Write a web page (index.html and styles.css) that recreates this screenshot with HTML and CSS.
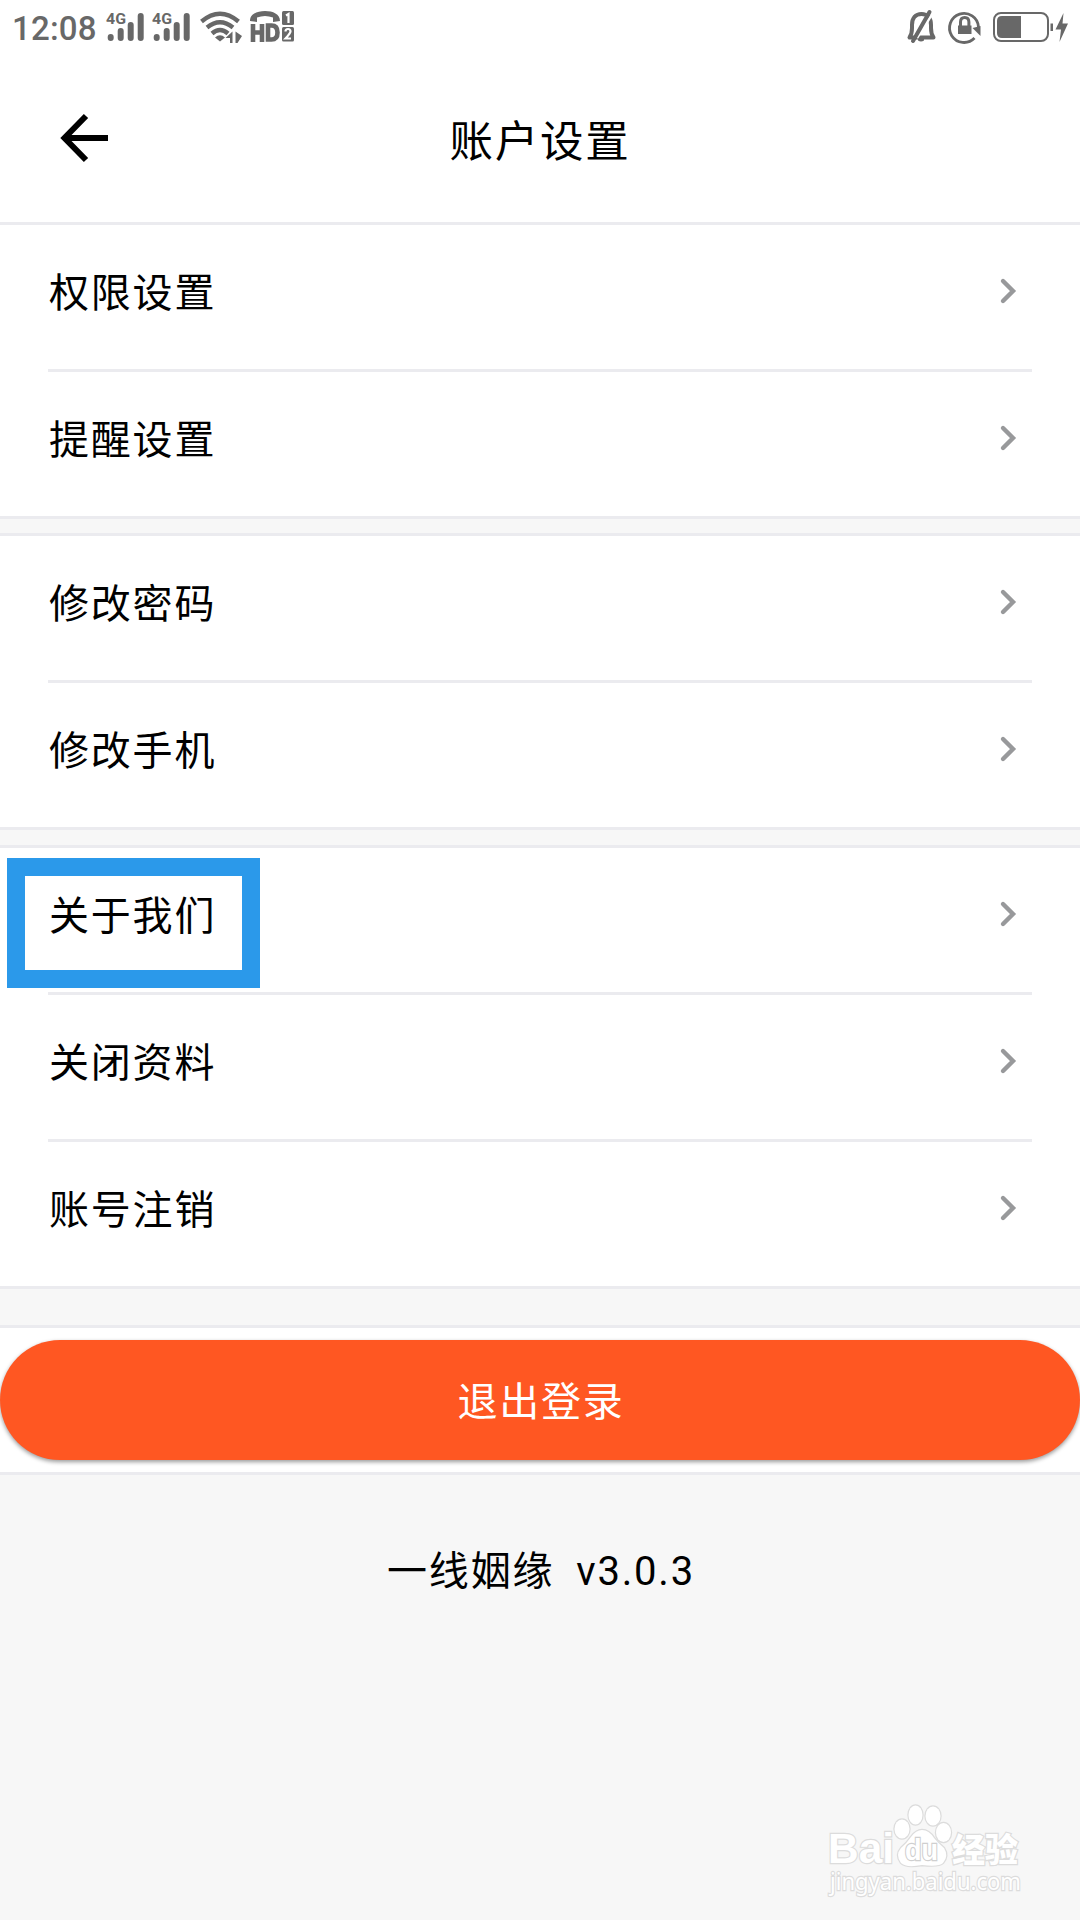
FILE: index.html
```html
<!DOCTYPE html>
<html lang="zh-CN">
<head>
<meta charset="utf-8">
<title>账户设置</title>
<link rel="stylesheet" href="styles.css">
</head>
<body>
<div class="screen">
  <div class="statusbar">
    <span class="clock">12:08</span>
    <svg class="signal" width="39" height="30" viewBox="0 0 39 30"><text class="net" x="0" y="12" textLength="20" lengthAdjust="spacingAndGlyphs">4G</text><path d="M4.700 25v1M14.700 19v7M24.700 13v13M34.700 4v22"/></svg>
    <svg class="signal second" width="39" height="30" viewBox="0 0 39 30"><text class="net" x="0" y="12" textLength="20" lengthAdjust="spacingAndGlyphs">4G</text><path d="M4.700 25v1M14.700 19v7M24.700 13v13M34.700 4v22"/></svg>
    <svg class="wifi" width="43" height="34" viewBox="0 0 43 34"><path class="arc" d="M1.500 9.500Q20 -6 38.500 9.500M7 15.500Q20 5 33 15.500M12 21.500Q20 14.500 28 21.500"/><path class="solid" d="M15 25.500Q20 21 25 25.500L20 29.500ZM32.500 19.500V31h-2.500v-5h-4.500ZM35.500 31V19.500l6.500 4.500L37.500 31Z"/></svg>
    <svg class="hd" width="45" height="34" viewBox="0 0 45 34"><path class="solid" d="M0 11C0 4 7 1 15 1s15 3 15 10l-7 1V7.500Q15 4.500 7 7.500V12Z"/><path class="letters" d="M3 14v18M12 14v18M3 22.500h9M18 15.500v14h3.500q6 0 6-7t-6-7Z"/><rect class="solid" x="32" y="1" width="12" height="14" rx="1.500"/><rect class="solid" x="32" y="17" width="12" height="14.500" rx="1.500"/><path class="digits" d="M36 5.500l2.500-1.500v9M35.500 21.500q0-2.500 2.500-2.500t2.500 2.500q0 1.500-5 7h5.500"/></svg>
    <span class="spacer"></span>
    <svg class="bell" width="31" height="36" viewBox="0 0 31 36"><path class="line" d="M3.500 29.500H27.500Q25 26 25 20V17C25 10 21.500 6 15.500 6S6 10 6 17v3Q6 26 3.500 29.500Z"/><path class="cut" d="M11 30L25 8"/><path class="slash" d="M7 33L23.500 4"/><path class="solid" d="M12 31h6v1.500q-3 2-6 0Z"/></svg>
    <svg class="lock" width="34" height="34" viewBox="0 0 34 34"><path class="ring" d="M26.500 28A14.500 14.500 0 1 1 30.500 17"/><path class="solid" d="M24.500 18l8-2V26ZM10 15.500h13.500v8.500H10Z"/><path class="shackle" d="M12.500 16v-4q0-4.500 4.200-4.500t4.200 4.500v4"/></svg>
    <svg class="battery" width="77" height="32" viewBox="0 0 77 32"><rect class="shell" x="1" y="2" width="54" height="28" rx="7"/><path class="solid" d="M9 5H28V27H9Q4 27 4 22V10Q4 5 9 5ZM57.500 12.500H60V20H57.500ZM70.500 2L62.500 18.500H68L66.500 31L75 12.500H69.500Z"/></svg>
  </div>

  <header class="titlebar">
    <svg class="back" width="50" height="50" viewBox="0 0 50 50"><path d="M26 3L4.500 25L26 47M4.500 25H48"/></svg>
    <h1>账户设置</h1>
  </header>

  <section class="group first">
    <div class="row"><span>权限设置</span><svg class="chevron" width="16" height="26" viewBox="0 0 16 26"><path d="M3 3L13 13L3 23"/></svg></div>
    <div class="row"><span>提醒设置</span><svg class="chevron" width="16" height="26" viewBox="0 0 16 26"><path d="M3 3L13 13L3 23"/></svg></div>
  </section>
  <section class="group second-group">
    <div class="row"><span>修改密码</span><svg class="chevron" width="16" height="26" viewBox="0 0 16 26"><path d="M3 3L13 13L3 23"/></svg></div>
    <div class="row"><span>修改手机</span><svg class="chevron" width="16" height="26" viewBox="0 0 16 26"><path d="M3 3L13 13L3 23"/></svg></div>
  </section>
  <section class="group third-group">
    <div class="row marked"><span>关于我们</span><svg class="chevron" width="16" height="26" viewBox="0 0 16 26"><path d="M3 3L13 13L3 23"/></svg></div>
    <div class="row"><span>关闭资料</span><svg class="chevron" width="16" height="26" viewBox="0 0 16 26"><path d="M3 3L13 13L3 23"/></svg></div>
    <div class="row"><span>账号注销</span><svg class="chevron" width="16" height="26" viewBox="0 0 16 26"><path d="M3 3L13 13L3 23"/></svg></div>
  </section>
  <section class="group logout">
    <button class="logout-button">退出登录</button>
  </section>
  <footer class="version"><span>一线姻缘</span><span class="number">v3.0.3</span></footer>

  <svg class="watermark" width="200" height="110" viewBox="0 0 200 110">
    <g class="mark">
      <text class="brand" x="-1" y="61" textLength="66" lengthAdjust="spacingAndGlyphs">Bai</text>
      <ellipse cx="73" cy="27" rx="7.500" ry="9.500"/><ellipse cx="86.500" cy="13" rx="7" ry="9.500"/><ellipse cx="104" cy="14" rx="7.500" ry="9.500"/><ellipse cx="114.500" cy="30.500" rx="7.500" ry="9.500"/>
      <path d="M93 28Q100 28 105 36Q109 41 115 46Q120 54 114 61Q110 65 93 63Q77 66 72 61Q66 53 72 46Q78 41 82 35Q87 28 93 28Z"/>
      <text class="du" x="76" y="58" textLength="33" lengthAdjust="spacingAndGlyphs">du</text>
      <text class="cn" x="123" y="60" textLength="66" lengthAdjust="spacingAndGlyphs">经验</text>
      <text class="site" x="1" y="88" textLength="191" lengthAdjust="spacingAndGlyphs">jingyan.baidu.com</text>
    </g>
  </svg>
</div>
</body>
</html>
```
FILE: styles.css
```css
*, *::after { box-sizing: border-box; }
body { margin: 0; background: #f7f7f7; }
.screen {
  position: relative;
  width: 1080px;
  height: 1920px;
  overflow: hidden;
  background: #f7f7f7;
  color: #000;
  font-family: Roboto, "Noto Sans CJK SC", sans-serif;
  font-size: 40px;
  letter-spacing: 1.8px;
}
svg { display: block; flex: none; fill: none; overflow: visible; }
.solid { fill: #686868; stroke: none; }

.statusbar {
  display: flex;
  align-items: flex-start;
  height: 56px;
  padding: 0 10px 0 12px;
  background: #fff;
  color: #686868;
  stroke: #686868;
}
.clock { width: 94px; padding-top: 8px; font-size: 33px; font-weight: 500; line-height: 42px; letter-spacing: 0.2px; stroke: none; }
.signal { margin-top: 12px; stroke-width: 6px; stroke-linecap: round; }
.signal.second { margin-left: 7px; }
.net { fill: #686868; stroke: none; font-size: 15px; font-weight: 700; letter-spacing: 0; }
.wifi { margin: 12px 0 0 9px; }
.arc { stroke-width: 4.4px; }
.hd { margin: 10px 0 0 7px; }
.letters { stroke-width: 4.6px; }
.digits { stroke: #fff; stroke-width: 2.2px; }
.spacer { flex: 1; }
.line { stroke-width: 4px; stroke-linejoin: round; }
.cut { stroke: #fff; stroke-width: 2.4px; }
.slash { stroke-width: 4px; stroke-linecap: round; }
.ring { stroke-width: 2.8px; }
.shackle { stroke-width: 3px; }
.bell { margin-top: 8px; }
.lock { margin: 10px 0 0 11px; }
.battery { margin: 11px 0 0 11px; }
.shell { stroke-width: 2px; }

.titlebar {
  position: relative;
  display: flex;
  align-items: center;
  justify-content: center;
  height: 166px;
  padding-top: 8px;
  background: #fff;
}
.titlebar h1 { margin: 0; font-size: 43.5px; font-weight: 400; line-height: 60px; }
.back { position: absolute; left: 60px; top: 57px; stroke: #000; stroke-width: 6px; }

.group { border-top: 3px solid #ebebef; border-bottom: 3px solid #ebebef; background: #fff; }
.second-group { margin-top: 14px; }
.third-group { margin-top: 15px; }
.row {
  position: relative;
  display: flex;
  align-items: center;
  justify-content: space-between;
  height: 144px;
  margin: 0 48px;
  padding: 0 16px 12px 1px;
  line-height: 60px;
}
.row span { padding-top: 5px; }
.row + .row { height: 147px; border-top: 3px solid #ebebef; }
.chevron { stroke: #98999b; stroke-width: 4.4px; stroke-linecap: round; }
.marked::after {
  content: "";
  position: absolute;
  left: -41px;
  top: 10px;
  width: 253px;
  height: 130px;
  border: 18px solid #2b99ea;
}

.logout { height: 150px; margin-top: 36px; padding-top: 12px; }
.logout-button {
  display: block;
  width: 1080px;
  height: 120px;
  padding: 0 0 2px 2px;
  border: 0;
  border-radius: 60px;
  background: #ff5722;
  box-shadow: 0 2px 4px rgba(0, 0, 0, 0.4);
  color: #fff;
  font: inherit;
  letter-spacing: inherit;
}
.version { display: flex; justify-content: center; gap: 22px; padding: 67px 0 0 2px; line-height: 60px; }
.watermark { position: absolute; left: 829px; top: 1802px; letter-spacing: 0; }
.mark { fill: #fff; stroke: #dcdcdc; stroke-width: 2.4px; paint-order: stroke; }
.brand { font: 700 43px "Liberation Sans", sans-serif; }
.du { font: 700 30px "Liberation Sans", sans-serif; stroke: #cfcfcf; }
.cn { font: 900 33px "Noto Sans CJK SC", sans-serif; }
.site { font: 400 24px "Noto Sans", sans-serif; }
```
